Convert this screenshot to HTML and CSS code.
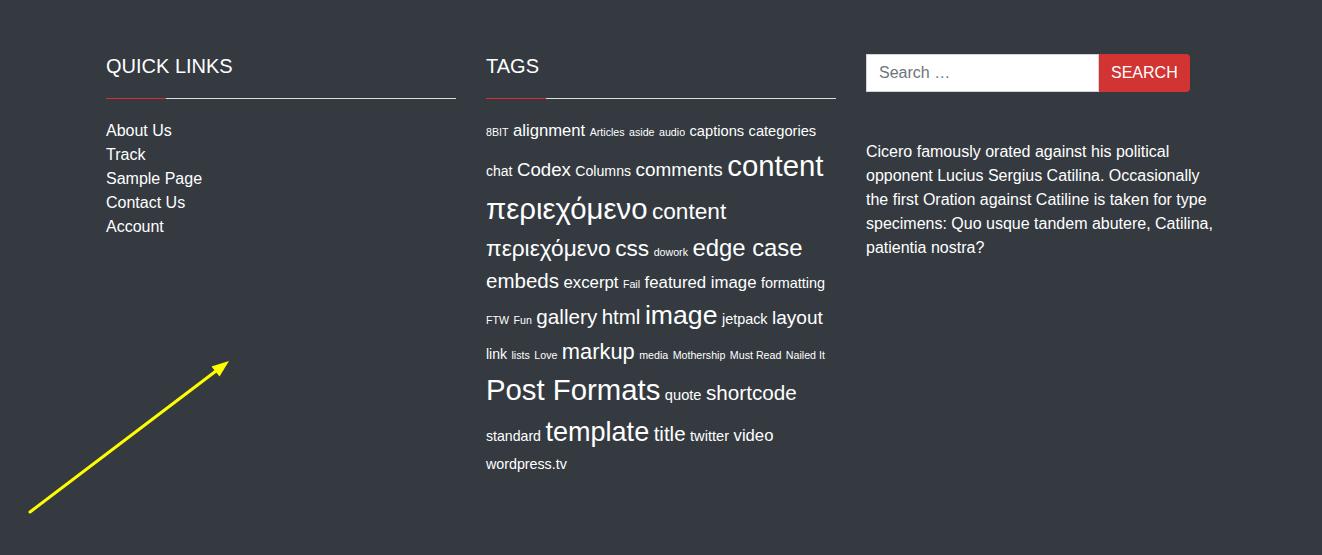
FILE: index.html
```html
<!DOCTYPE html>
<html lang="en">
<head>
    <meta charset="UTF-8">
    <meta name="viewport" content="width=device-width, initial-scale=1.0">
    <title>Footer Widgets</title>
    <link rel="stylesheet" href="styles.css">
</head>
<body>
<footer class="site-footer">
    <div class="footer-row">
        <section class="widget">
            <h2 class="widget-title">Quick Links</h2>
            <ul class="menu">
                <li><a href="#">About Us</a></li>
                <li><a href="#">Track</a></li>
                <li><a href="#">Sample Page</a></li>
                <li><a href="#">Contact Us</a></li>
                <li><a href="#">Account</a></li>
            </ul>
        </section>

        <section class="widget">
            <h2 class="widget-title">Tags</h2>
            <div class="tagcloud">
                <a href="#" style="font-size: 8pt;">8BIT</a>
                <a href="#" style="font-size: 12.5pt;">alignment</a>
                <a href="#" style="font-size: 8pt;">Articles</a>
                <a href="#" style="font-size: 8pt;">aside</a>
                <a href="#" style="font-size: 8pt;">audio</a>
                <a href="#" style="font-size: 11pt;">captions</a>
                <a href="#" style="font-size: 11pt;">categories</a>
                <a href="#" style="font-size: 10.5pt;">chat</a>
                <a href="#" style="font-size: 14pt;">Codex</a>
                <a href="#" style="font-size: 10.6pt;">Columns</a>
                <a href="#" style="font-size: 14.2pt;">comments</a>
                <a href="#" style="font-size: 22pt;">content περιεχόμενο</a>
                <a href="#" style="font-size: 17pt;">content περιεχόμενο</a>
                <a href="#" style="font-size: 17pt;">css</a>
                <a href="#" style="font-size: 8pt;">dowork</a>
                <a href="#" style="font-size: 17.9pt;">edge case</a>
                <a href="#" style="font-size: 15.4pt;">embeds</a>
                <a href="#" style="font-size: 12.6pt;">excerpt</a>
                <a href="#" style="font-size: 8pt;">Fail</a>
                <a href="#" style="font-size: 12.6pt;">featured image</a>
                <a href="#" style="font-size: 10.8pt;">formatting</a>
                <a href="#" style="font-size: 8pt;">FTW</a>
                <a href="#" style="font-size: 8pt;">Fun</a>
                <a href="#" style="font-size: 15.5pt;">gallery</a>
                <a href="#" style="font-size: 15.4pt;">html</a>
                <a href="#" style="font-size: 20pt;">image</a>
                <a href="#" style="font-size: 10.8pt;">jetpack</a>
                <a href="#" style="font-size: 14.3pt;">layout</a>
                <a href="#" style="font-size: 10.5pt;">link</a>
                <a href="#" style="font-size: 8pt;">lists</a>
                <a href="#" style="font-size: 8pt;">Love</a>
                <a href="#" style="font-size: 16.4pt;">markup</a>
                <a href="#" style="font-size: 8pt;">media</a>
                <a href="#" style="font-size: 8pt;">Mothership</a>
                <a href="#" style="font-size: 8pt;">Must Read</a>
                <a href="#" style="font-size: 8pt;">Nailed It</a>
                <a href="#" style="font-size: 22pt;">Post Formats</a>
                <a href="#" style="font-size: 11pt;">quote</a>
                <a href="#" style="font-size: 15.5pt;">shortcode</a>
                <a href="#" style="font-size: 10.6pt;">standard</a>
                <a href="#" style="font-size: 20.3pt;">template</a>
                <a href="#" style="font-size: 15.4pt;">title</a>
                <a href="#" style="font-size: 11pt;">twitter</a>
                <a href="#" style="font-size: 12.5pt;">video</a>
                <a href="#" style="font-size: 10.7pt;">wordpress.tv</a>
            </div>
        </section>

        <section class="widget">
            <form class="search-form" onsubmit="return false;">
                <input type="search" class="search-field" placeholder="Search …">
                <button type="submit" class="search-submit">Search</button>
            </form>
            <p class="widget-text">Cicero famously orated against his political opponent Lucius Sergius Catilina. Occasionally the first Oration against Catiline is taken for type specimens: Quo usque tandem abutere, Catilina, patientia nostra?</p>
        </section>
    </div>
</footer>

<!-- pointer drawn over the footer -->
<svg class="pointer" width="1322" height="555" viewBox="0 0 1322 555">
    <line x1="30" y1="512" x2="216" y2="371" stroke="#ffff00" stroke-width="3" stroke-linecap="round"/>
    <polygon points="229,361 211.5,366.5 219.5,376.5" fill="#ffff00"/>
</svg>
</body>
</html>
```

FILE: styles.css
```css
html, body {
    margin: 0;
    height: 100%;
}
body {
    background-color: #343a40;
    color: #fff;
    font-family: "Liberation Sans", Arial, sans-serif;
    font-size: 16px;
    line-height: 1.5;
    position: relative;
    overflow: hidden;
}
a {
    color: #fff;
    text-decoration: none;
}
.site-footer {
    padding-top: 54px;
}
.footer-row {
    width: 1110px;
    margin: 0 auto;
    display: grid;
    grid-template-columns: repeat(3, 350px);
    column-gap: 30px;
}
.widget-title {
    position: relative;
    margin: 0 0 20px;
    padding-bottom: 20px;
    font-size: 20px;
    font-weight: normal;
    line-height: 1.2;
    text-transform: uppercase;
    border-bottom: 1px solid #ddd;
}
.widget-title::after {
    content: "";
    position: absolute;
    left: 0;
    bottom: -1px;
    width: 60px;
    height: 1px;
    background-color: #d9302c;
}
.menu {
    list-style: none;
    margin: 0;
    padding: 0;
}
.menu li {
    line-height: 24px;
}
.tagcloud {
    line-height: 1.5;
}
.tagcloud a {
    line-height: 1.48;
}
.search-form {
    display: flex;
    margin: 0 0 48px;
}
.search-field {
    width: 233px;
    height: 38px;
    box-sizing: border-box;
    padding: 6px 12px;
    border: 1px solid #ced4da;
    border-radius: 0;
    font-family: inherit;
    font-size: 16px;
    color: #495057;
    background: #fff;
    outline: none;
}
.search-field::placeholder {
    color: #6c757d;
}
.search-submit {
    height: 38px;
    padding: 0 12px;
    border: none;
    border-radius: 0 4px 4px 0;
    background-color: #d13433;
    color: #fff;
    font-family: inherit;
    font-size: 16px;
    text-transform: uppercase;
    cursor: pointer;
}
.widget-text {
    margin: 0;
    line-height: 24px;
}
.pointer {
    position: absolute;
    left: 0;
    top: 0;
    pointer-events: none;
}
```
